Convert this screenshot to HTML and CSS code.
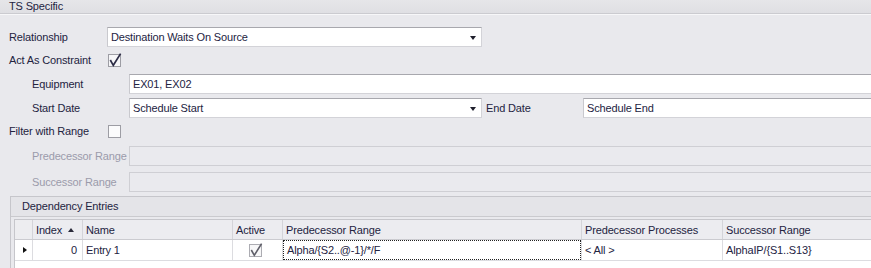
FILE: index.html
```html
<!DOCTYPE html>
<html>
<head>
<meta charset="utf-8">
<link rel="stylesheet" href="styles.css">
</head>
<body>
<div class="title">TS Specific</div>
<div class="form">
  <div class="row r1">
    <span class="lbl w98">Relationship</span>
    <div class="box combo w375"><span>Destination Waits On Source</span><i class="arrow"></i></div>
  </div>
  <div class="row r2">
    <span class="lbl w99">Act As Constraint</span>
    <svg class="chk" width="15" height="15" viewBox="0 0 15 15"><rect x="0.5" y="1.5" width="12" height="12" fill="#f6f6f8" stroke="#9d9da4"/><polyline points="2.3,7 5.3,12.3 12.6,0.6" fill="none" stroke="#2c2c46" stroke-width="1.7"/></svg>
  </div>
  <div class="row r3 sub">
    <span class="lbl w97">Equipment</span>
    <div class="box grow"><span>EX01, EX02</span></div>
  </div>
  <div class="row r4 sub">
    <span class="lbl w97">Start Date</span>
    <div class="box combo w353"><span>Schedule Start</span><i class="arrow"></i></div>
    <span class="lbl w97 end">End Date</span>
    <div class="box grow"><span>Schedule End</span></div>
  </div>
  <div class="row r5">
    <span class="lbl w99">Filter with Range</span>
    <svg class="chk" width="15" height="15" viewBox="0 0 15 15"><rect x="0.5" y="1.5" width="12" height="12" fill="#fbfbfc" stroke="#9d9da4"/></svg>
  </div>
  <div class="row r6 sub">
    <span class="lbl w97 dis">Predecessor Range</span>
    <div class="box grow disabled"></div>
  </div>
  <div class="row r7 sub">
    <span class="lbl w97 dis">Successor Range</span>
    <div class="box grow disabled"></div>
  </div>
</div>
<div class="group">
  <div class="group-head">Dependency Entries</div>
  <div class="grid">
    <div class="grow-row head">
      <div class="cell c-ind"></div>
      <div class="cell c-idx">Index<i class="sort"></i></div>
      <div class="cell c-name">Name</div>
      <div class="cell c-act">Active</div>
      <div class="cell c-pred">Predecessor Range</div>
      <div class="cell c-proc">Predecessor Processes</div>
      <div class="cell c-succ">Successor Range</div>
    </div>
    <div class="grow-row data">
      <div class="cell c-ind"><i class="ptr"></i></div>
      <div class="cell c-idx num">0</div>
      <div class="cell c-name">Entry 1</div>
      <div class="cell c-act center">
        <svg width="15" height="15" viewBox="0 0 15 15"><rect x="0.5" y="1.5" width="12" height="12" fill="#f7f7f8" stroke="#acacb2"/><polyline points="2.3,7 5.3,12.3 12.6,0.6" fill="none" stroke="#5e5e68" stroke-width="1.6"/></svg>
      </div>
      <div class="cell c-pred focus"><span>Alpha/{S2..@-1}/*/F</span></div>
      <div class="cell c-proc">&lt; All &gt;</div>
      <div class="cell c-succ">AlphaIP/{S1..S13}</div>
    </div>
  </div>
</div>
</body>
</html>
```

FILE: styles.css
```css
html, body {
  margin: 0;
  padding: 0;
}
body {
  width: 871px;
  height: 268px;
  overflow: hidden;
  background: #e9e9ed;
  font-family: "Liberation Sans", Arial, sans-serif;
  font-size: 11px;
  letter-spacing: -0.15px;
  color: #23233f;
}
.title {
  height: 13px;
  line-height: 13px;
  padding-left: 9px;
  background: linear-gradient(#e6e6e9, #dfdfe3);
  border-bottom: 1px solid #cbcbd0;
  box-shadow: 0 1px 0 #f7f7f9;
}
.form {
  padding-left: 9px;
}
.row {
  display: flex;
  align-items: center;
  height: 20px;
}
.sub { padding-left: 23px; }
.r1 { margin-top: 13px; }
.r2 { margin-top: 3px; }
.r3 { margin-top: 4px; }
.r4 { margin-top: 4px; }
.r5 { margin-top: 3px; }
.r6 { margin-top: 5px; }
.r7 { margin-top: 6px; }
.lbl {
  flex: none;
  white-space: nowrap;
}
.w97 { width: 97px; }
.w98 { width: 98px; }
.w99 { width: 99px; }
.end { margin-left: 4px; }
.dis { color: #9b9bab; }
.chk { flex: none; overflow: visible; }
.box {
  box-sizing: border-box;
  height: 20px;
  background: #fff;
  border: 1px solid;
  border-color: #a8a8ae #d3d3d8 #d3d3d8 #c9c9ce;
  padding-left: 3px;
  display: flex;
  align-items: center;
  flex: none;
  white-space: nowrap;
}
.box span { flex: 1; }
.w375 { width: 375px; }
.w353 { width: 353px; }
.grow { flex: 1; border-right: none; }
.disabled {
  background: #eaeaee;
  border-color: #cfcfd4;
}
.arrow {
  width: 0;
  height: 0;
  border-left: 3.5px solid transparent;
  border-right: 3.5px solid transparent;
  border-top: 4px solid #1f1f2c;
  margin-right: 5px;
  margin-top: 1px;
}
.group {
  margin-top: 4px;
  margin-left: 10px;
  border-left: 1px solid #c6c6cb;
  border-top: 1px solid #c6c6cb;
  height: 71px;
  overflow: hidden;
}
.group-head {
  height: 19px;
  line-height: 19px;
  padding-left: 11px;
  background: #e4e4e8;
  border-bottom: 1px solid #cacace;
}
.grid {
  margin: 2px 0 0 3px;
  border-left: 1px solid #c6c6cb;
  border-top: 1px solid #c6c6cb;
  background: #fff;
  height: 48px;
  overflow: hidden;
}
.grow-row {
  display: flex;
  box-sizing: border-box;
}
.head {
  height: 20px;
  background: #ececf0;
  border-bottom: 1px solid #cbcbd0;
}
.data {
  height: 21px;
  background: #fff;
  border-bottom: 1px solid #dcdce0;
}
.cell {
  box-sizing: border-box;
  flex: none;
  border-right: 1px solid #d4d4d9;
  padding-left: 3px;
  display: flex;
  align-items: center;
  white-space: nowrap;
}
.data .cell { border-right-color: #dcdce0; }
.c-ind { width: 18px; padding-left: 0; }
.head .c-ind { background: #ededf0; }
.c-idx { width: 50px; }
.c-name { width: 150px; }
.c-act { width: 50px; }
.c-pred { width: 299px; }
.c-proc { width: 141px; }
.c-succ { flex: 1; min-width: 0; border-right: none; }
.num { justify-content: flex-end; padding-right: 5px; }
.center { justify-content: center; padding-left: 0; padding-right: 2px; }
.sort {
  width: 0;
  height: 0;
  border-left: 3.5px solid transparent;
  border-right: 3.5px solid transparent;
  border-bottom: 4px solid #2a2a3a;
  margin-left: 6px;
}
.ptr {
  width: 0;
  height: 0;
  border-top: 3.5px solid transparent;
  border-bottom: 3.5px solid transparent;
  border-left: 4px solid #111;
  margin-left: 8px;
}
.focus {
  padding-left: 0;
}
.focus span {
  box-sizing: border-box;
  align-self: stretch;
  flex: 1;
  border: 1px dotted #222;
  padding-left: 3px;
  display: flex;
  align-items: center;
}
```
